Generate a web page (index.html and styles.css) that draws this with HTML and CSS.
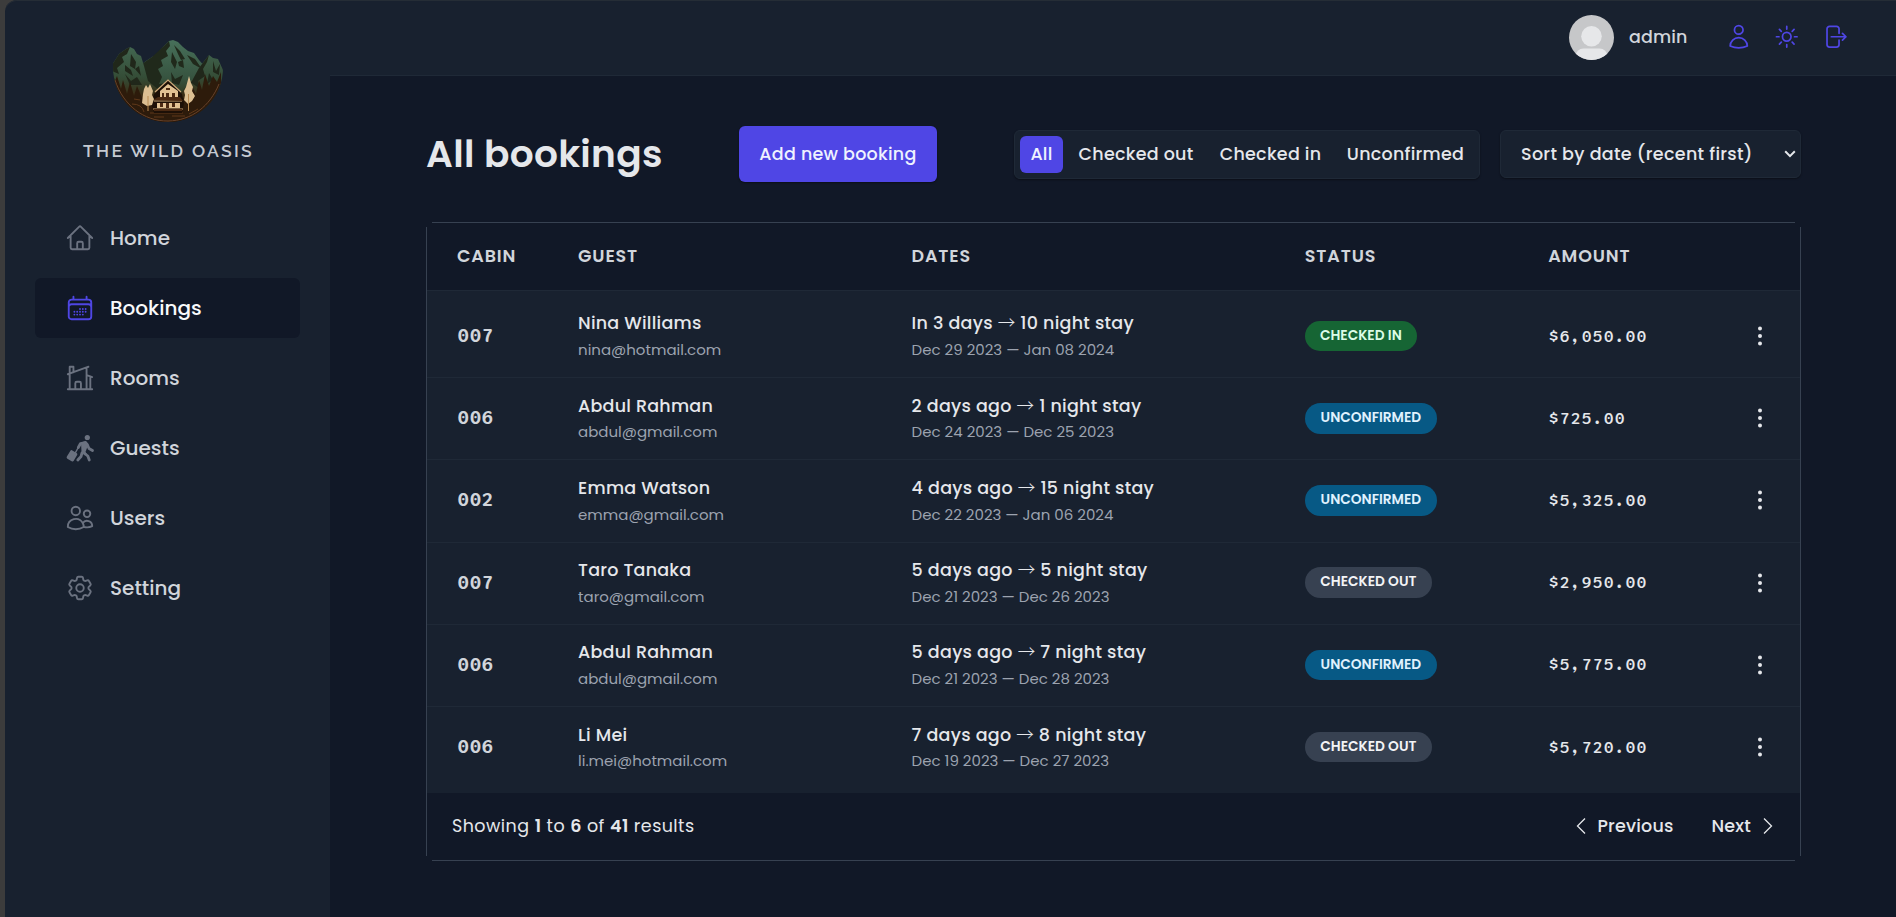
FILE: index.html
```html
<!DOCTYPE html>
<html lang="en">
<head>
<meta charset="utf-8">
<title>The Wild Oasis</title>
<link rel="stylesheet" href="styles.css">
</head>
<body>
<div class="app">
  <aside class="sidebar">
    <div class="logo">
      <svg class="logo-art" width="112" height="86" viewBox="0 0 112 86">
        <defs>
          <linearGradient id="mount" x1="0" y1="0" x2="0" y2="1"><stop offset="0" stop-color="#47705a"/><stop offset=".45" stop-color="#375440"/><stop offset=".68" stop-color="#31361d"/><stop offset="1" stop-color="#2b1708"/></linearGradient>
          <linearGradient id="side" x1="0" y1="0" x2="0" y2="1"><stop offset="0" stop-color="#426650"/><stop offset=".4" stop-color="#344c36"/><stop offset=".65" stop-color="#3b2a12"/><stop offset="1" stop-color="#261305"/></linearGradient>
          <clipPath id="bowl"><path d="M1 0H111V28C112 62 84 84 56 84S0 62 1 27Z"/></clipPath>
        </defs>
        <g clip-path="url(#bowl)">
          <path fill="url(#mount)" d="M30 26L34 23 40 19 45 16 52 8 57 3 61 2 66 4 71 9 76 13 82 15 87 22 94 30V86H20Z"/>
          <path fill="#20291b" d="M30 26L40 19 52 8 57 3 58 8 54 13 56 18 49 22 51 28 46 31 50 39 47 46 56 45 62 52 48 58 36 48 30 36ZM62 7L68 13 73 21 69 22 66 16ZM66 24l5-2 1 8-5-2zM75 17l8 4 7 10-9-5zM60 14l5 10-2 7-4-7zM59 34l4 7 8-4-4 10-7-2z"/>
          <path fill="url(#side)" d="M0 27L7 16 14 11 18 9 22 11 25 16 29 18 32 28 36 43 54 58 66 58 80 43 87 30 93 22 97 17 101 20 106 21 111 32V86H0Z"/>
          <path fill="#20271a" d="M0 27L7 16 14 11 18 9 15 16 10 19 12 24 5 30 7 36 0 33ZM19 16l5 8-1 7 4-3 2 10-6-7-5-3zM13 27l6 5 2 6-8-5zM80 43L87 30 97 17 95 24 91 31 93 38 86 43 87 50 78 44 68 56ZM101 23l3 10 4-7-1 11-6-3zM97 35l4 7-6 4zM13 36l6 7 6-4 5 8-12 0z"/>
          <path fill="#2d1b0b" d="M0 34l3 9 2-5 4 13 2-9 4 14 3-12 4 14 3-10 5 12h45l5-12 4 8 3-14 3 10 3-16 4 12 4-10 4 6 4-10V86H0Z"/>
          <path fill="none" stroke="#68422a" stroke-width="1" d="M3 42C11 67 32 83.500 56 83S98 68 107 46"/>
          <path fill="none" stroke="#60391a" d="M20 66q10 0 12 8M38 75h33M42 79h10m8-1h13M22 61l6 1m58 9-9 5"/>
        </g>
        <path fill="#1d1007" d="M39 65L42 56 56 42 70 56 72 65 70 75H42Z"/>
        <path fill="#e2c294" d="M48 53L56 46 66 53V60H48ZM45 65H68V70H45Z"/>
        <path fill="none" stroke="#cca677" stroke-width="1.200" d="M43 54L56 42 69 54M42 63h28M41 71h30"/>
        <path fill="#4b2a13" d="M41 62L46 59H68L71 63ZM50 55h2v4h-2zm4 0h3v4h-3zm6 0h3v4h-3zM48 65h3v4h-3zm6 0h3v5h-3zm6 0h3v4h-3zM54 50h4v2h-4zM42 71h28v2H42z"/>
        <path fill="#dcbf92" d="M34 47l2 3 2-4 3 7-1 4 2 4-2 6-5 1-5-3 1-9 1-5ZM77 38l2 7 2 4-1 4 3 5-3 5-4 3-4-4 1-5-1-4 2-4Z"/>
        <path fill="none" stroke="#b98b52" stroke-width="1" d="M36 58v15M76.500 56v17"/>
      </svg>
      <div class="logo-name">THE WILD OASIS</div>
    </div>
    <nav class="nav">
      <a class="nav-item"><svg class="icon" viewBox="0 0 24 24"><path d="m2.25 12 8.954-8.955c.44-.439 1.152-.439 1.591 0L21.75 12M4.500 9.750v10.125c0 .621.504 1.125 1.125 1.125H9.750v-4.875c0-.621.504-1.125 1.125-1.125h2.250c.621 0 1.125.504 1.125 1.125V21h4.125c.621 0 1.125-.504 1.125-1.125V9.750M8.250 21h8.250"/></svg><span>Home</span></a>
      <a class="nav-item active"><svg class="icon" viewBox="0 0 24 24"><path d="M6.750 3v2.250M17.250 3v2.250M3 18.750V7.500a2.250 2.250 0 0 1 2.250-2.250h13.500A2.250 2.250 0 0 1 21 7.500v11.250m-18 0A2.250 2.250 0 0 0 5.250 21h13.500A2.250 2.250 0 0 0 21 18.750m-18 0v-7.500A2.250 2.250 0 0 1 5.250 9h13.500A2.250 2.250 0 0 1 21 11.250v7.500m-9-6h.008v.008H12v-.008ZM12 15h.008v.008H12V15Zm0 2.250h.008v.008H12v-.008ZM9.750 15h.008v.008H9.750V15Zm0 2.250h.008v.008H9.750v-.008ZM7.500 15h.008v.008H7.500V15Zm0 2.250h.008v.008H7.500v-.008Zm6.750-4.500h.008v.008h-.008v-.008Zm0 2.250h.008v.008h-.008V15Zm0 2.250h.008v.008h-.008v-.008Zm2.250-4.500h.008v.008H16.500v-.008Zm0 2.250h.008v.008H16.500V15Z"/></svg><span>Bookings</span></a>
      <a class="nav-item"><svg class="icon" viewBox="0 0 24 24"><path d="M8.250 21v-4.875c0-.621.504-1.125 1.125-1.125h2.250c.621 0 1.125.504 1.125 1.125V21m0 0h4.500V3.545M12.750 21h7.500V10.750M2.250 21h1.500m18 0h-18M2.250 9l4.500-1.636M18.750 3l-1.500.545m0 6.205 3 1m1.500.5-1.500-.5M6.750 7.364V3h-3v18m3-13.636 10.500-3.819"/></svg><span>Rooms</span></a>
      <a class="nav-item"><svg class="icon walker" viewBox="0 0 30 30"><circle class="solid" cx="22.300" cy="4.500" r="2.600"/><rect class="solid" x="3" y="18" width="8" height="9.600" rx="1.500" transform="rotate(31 7 22.800)"/><path d="M10.500 19.500l2.500-4.500"/><path class="limb" d="M13.300 14.500L15.500 10.500 20 9.500 22.500 12 24 15.500 27.500 17.500M17 20L16 23.500 12.800 27M19 20l3.800 3 1.500 4"/><path class="solid" d="M16 9.500l5-1.500 2.500 3-3 8 1.500 2-2 1.500-3.500-3.500Z"/></svg><span>Guests</span></a>
      <a class="nav-item"><svg class="icon" viewBox="0 0 24 24"><path d="M15 19.128a9.380 9.380 0 0 0 2.625.372 9.337 9.337 0 0 0 4.121-.952 4.125 4.125 0 0 0-7.533-2.493M15 19.128v-.003c0-1.113-.285-2.160-.786-3.070M15 19.128v.106A12.318 12.318 0 0 1 8.624 21c-2.331 0-4.512-.645-6.374-1.766l-.001-.109a6.375 6.375 0 0 1 11.964-3.070M12 6.375a3.375 3.375 0 1 1-6.750 0 3.375 3.375 0 0 1 6.750 0Zm8.250 2.250a2.625 2.625 0 1 1-5.250 0 2.625 2.625 0 0 1 5.250 0Z"/></svg><span>Users</span></a>
      <a class="nav-item"><svg class="icon" viewBox="0 0 24 24"><path d="M9.594 3.940c.09-.542.56-.94 1.110-.94h2.593c.55 0 1.020.398 1.110.94l.213 1.281c.063.374.313.686.645.87.074.04.147.083.22.127.324.196.72.257 1.075.124l1.217-.456a1.125 1.125 0 0 1 1.370.49l1.296 2.247a1.125 1.125 0 0 1-.26 1.431l-1.003.827c-.293.24-.438.613-.431.992a6.759 6.759 0 0 1 0 .255c-.007.378.138.75.43.99l1.005.828c.424.35.534.954.26 1.430l-1.298 2.247a1.125 1.125 0 0 1-1.369.491l-1.217-.456c-.355-.133-.75-.072-1.076.124a6.570 6.570 0 0 1-.22.128c-.331.183-.581.495-.644.869l-.213 1.280c-.09.543-.56.941-1.110.941h-2.594c-.55 0-1.020-.398-1.110-.94l-.213-1.281c-.062-.374-.312-.686-.644-.87a6.520 6.520 0 0 1-.22-.127c-.325-.196-.72-.257-1.076-.124l-1.217.456a1.125 1.125 0 0 1-1.369-.49l-1.297-2.247a1.125 1.125 0 0 1 .26-1.431l1.004-.827c.292-.24.437-.613.43-.992a6.932 6.932 0 0 1 0-.255c.007-.378-.138-.75-.43-.99l-1.004-.828a1.125 1.125 0 0 1-.26-1.430l1.297-2.247a1.125 1.125 0 0 1 1.370-.491l1.216.456c.356.133.751.072 1.076-.124.072-.044.146-.087.22-.128.332-.183.582-.495.644-.869l.214-1.281ZM15 12a3 3 0 1 1-6 0 3 3 0 0 1 6 0Z"/></svg><span>Setting</span></a>
    </nav>
  </aside>
  <div class="page">
    <header class="topbar">
      <svg class="avatar" viewBox="0 0 45 45"><defs><clipPath id="face"><circle cx="22.500" cy="22.500" r="22.500"/></clipPath></defs><g clip-path="url(#face)"><path fill="#c6c7c9" d="M0 0h45v45H0z"/><circle cx="22.500" cy="21.300" r="10.300" fill="#e6e7e9"/><rect x="6.500" y="33.500" width="32" height="20" rx="8" fill="#e6e7e9"/></g></svg>
      <span class="user-name">admin</span>
      <div class="tools">
        <svg class="tool" viewBox="0 0 24 24"><path d="M15.750 6a3.750 3.750 0 1 1-7.500 0 3.750 3.750 0 0 1 7.500 0ZM4.501 20.118a7.500 7.500 0 0 1 14.998 0A17.933 17.933 0 0 1 12 21.750c-2.676 0-5.216-.584-7.499-1.632Z"/></svg>
        <svg class="tool" viewBox="0 0 24 24"><path d="M12 3v2.250m6.364.386-1.591 1.591M21 12h-2.250m-.386 6.364-1.591-1.591M12 18.750V21m-4.773-4.227-1.591 1.591M5.250 12H3m4.227-4.773L5.636 5.636M15.750 12a3.750 3.750 0 1 1-7.500 0 3.750 3.750 0 0 1 7.500 0Z"/></svg>
        <svg class="tool" viewBox="0 0 24 24"><path d="M15.750 9V5.250A2.250 2.250 0 0 0 13.500 3h-6a2.250 2.250 0 0 0-2.250 2.250v13.500A2.250 2.250 0 0 0 7.500 21h6a2.250 2.250 0 0 0 2.250-2.250V15m3 0 3-3m0 0-3-3m3 3H9"/></svg>
      </div>
    </header>
    <main class="main">
      <div class="heading">
        <h1>All bookings</h1>
        <button class="add">Add new booking</button>
        <div class="filter">
          <button class="on">All</button><button class="f-out">Checked out</button><button class="f-in">Checked in</button><button class="f-un">Unconfirmed</button>
        </div>
        <div class="sort"><span>Sort by date (recent first)</span><svg width="12" height="8" viewBox="0 0 12 8"><path d="M1.200 1.300 6 6.100l4.800-4.800"/></svg></div>
      </div>
      <section class="table">
        <div class="row head"><div>CABIN</div><div>GUEST</div><div>DATES</div><div>STATUS</div><div>AMOUNT</div><div></div></div>
        <div class="body">
          <div class="row"><div class="cabin">007</div><div><p class="name">Nina Williams</p><p class="mail">nina@hotmail.com</p></div><div><p class="stay">In 3 days <i>→</i> 10 night stay</p><p class="span">Dec 29 2023 — Jan 08 2024</p></div><div><span class="tag in">CHECKED IN</span></div><div class="amount">$6,050.00</div><svg class="dots" viewBox="0 0 30 30"><circle cx="15" cy="7.500" r="2"/><circle cx="15" cy="15" r="2"/><circle cx="15" cy="22.500" r="2"/></svg></div>
          <div class="row"><div class="cabin">006</div><div><p class="name">Abdul Rahman</p><p class="mail">abdul@gmail.com</p></div><div><p class="stay">2 days ago <i>→</i> 1 night stay</p><p class="span">Dec 24 2023 — Dec 25 2023</p></div><div><span class="tag un">UNCONFIRMED</span></div><div class="amount">$725.00</div><svg class="dots" viewBox="0 0 30 30"><circle cx="15" cy="7.500" r="2"/><circle cx="15" cy="15" r="2"/><circle cx="15" cy="22.500" r="2"/></svg></div>
          <div class="row"><div class="cabin">002</div><div><p class="name">Emma Watson</p><p class="mail">emma@gmail.com</p></div><div><p class="stay">4 days ago <i>→</i> 15 night stay</p><p class="span">Dec 22 2023 — Jan 06 2024</p></div><div><span class="tag un">UNCONFIRMED</span></div><div class="amount">$5,325.00</div><svg class="dots" viewBox="0 0 30 30"><circle cx="15" cy="7.500" r="2"/><circle cx="15" cy="15" r="2"/><circle cx="15" cy="22.500" r="2"/></svg></div>
          <div class="row"><div class="cabin">007</div><div><p class="name">Taro Tanaka</p><p class="mail">taro@gmail.com</p></div><div><p class="stay">5 days ago <i>→</i> 5 night stay</p><p class="span">Dec 21 2023 — Dec 26 2023</p></div><div><span class="tag out">CHECKED OUT</span></div><div class="amount">$2,950.00</div><svg class="dots" viewBox="0 0 30 30"><circle cx="15" cy="7.500" r="2"/><circle cx="15" cy="15" r="2"/><circle cx="15" cy="22.500" r="2"/></svg></div>
          <div class="row"><div class="cabin">006</div><div><p class="name">Abdul Rahman</p><p class="mail">abdul@gmail.com</p></div><div><p class="stay">5 days ago <i>→</i> 7 night stay</p><p class="span">Dec 21 2023 — Dec 28 2023</p></div><div><span class="tag un">UNCONFIRMED</span></div><div class="amount">$5,775.00</div><svg class="dots" viewBox="0 0 30 30"><circle cx="15" cy="7.500" r="2"/><circle cx="15" cy="15" r="2"/><circle cx="15" cy="22.500" r="2"/></svg></div>
          <div class="row"><div class="cabin">006</div><div><p class="name">Li Mei</p><p class="mail">li.mei@hotmail.com</p></div><div><p class="stay">7 days ago <i>→</i> 8 night stay</p><p class="span">Dec 19 2023 — Dec 27 2023</p></div><div><span class="tag out">CHECKED OUT</span></div><div class="amount">$5,720.00</div><svg class="dots" viewBox="0 0 30 30"><circle cx="15" cy="7.500" r="2"/><circle cx="15" cy="15" r="2"/><circle cx="15" cy="22.500" r="2"/></svg></div>
        </div>
        <footer class="foot">
          <p class="count">Showing <b>1</b> to <b>6</b> of <b>41</b> results</p>
          <div class="pager">
            <a><svg width="10" height="18" viewBox="0 0 10 18"><path d="M9 1.500 1.500 9 9 16.500"/></svg><span>Previous</span></a>
            <a><span>Next</span><svg width="10" height="18" viewBox="0 0 10 18"><path d="M1 1.500 8.500 9 1 16.500"/></svg></a>
          </div>
        </footer>
      </section>
    </main>
  </div>
</div>
</body>
</html>
```

FILE: styles.css
```css
* { box-sizing: border-box; margin: 0; padding: 0; }
body { height: 917px; overflow: hidden; background: #3c3c3c; padding-left: 5px; font-family: Poppins, Inter, sans-serif; font-size: 17.5px; color: #e5e7eb; white-space: nowrap; }
button { font: inherit; color: inherit; border: 0; background: none; letter-spacing: inherit; }

.app { display: flex; height: 917px; background: #18212f; box-shadow: inset 0 1px #252d36; border-top-left-radius: 12px; overflow: hidden; }
.sidebar { width: 325px; flex: none; padding: 38px 30px 0; }
.logo { display: flex; flex-direction: column; align-items: center; height: 170px; }
.logo-art { display: block; }
.logo-name { font-family: Raleway, Lato, sans-serif; font-size: 17.5px; line-height: 22px; font-weight: 600; letter-spacing: 2.3px; color: #c5cad2; margin-top: 16px; padding-left: 2px; }

.nav { display: flex; flex-direction: column; gap: 10px; }
.nav-item { display: flex; align-items: center; gap: 15px; height: 60px; padding: 0 30px; border-radius: 6px; font-size: 20px; font-weight: 500; color: #d1d5db; }
.nav-item span { padding-bottom: 1px; }
.nav-item.active { background: #111827; color: #f9fafb; }
.icon, .tool { fill: none; stroke: #6b7280; stroke-width: 1.5; stroke-linecap: round; stroke-linejoin: round; }
.icon { width: 30px; height: 30px; }
.active .icon { stroke: #4f46e5; }
.walker .solid { fill: #6b7280; stroke: none; }
.walker .limb { stroke-width: 2.8; }

.page { flex: 1; display: flex; flex-direction: column; }
.topbar { height: 76px; display: flex; align-items: center; justify-content: flex-end; padding: 0 47.5px 1px 0; border-bottom: 1px solid #1f2937; }
.avatar { width: 45px; height: 45px; margin-right: 15.5px; }
.user-name { font-weight: 500; width: 59px; color: #d1d5db; padding-bottom: 1px; letter-spacing: .1px; }
.tools { display: flex; gap: 20.5px; margin-left: 37px; }
.tool { width: 27.5px; height: 27.5px; stroke: #4f46e5; }

.main { flex: 1; background: #111827; padding: 50px 95px 0 96px; }
.heading { display: flex; align-items: center; height: 56px; margin-bottom: 40px; letter-spacing: .26px; }
h1 { width: 313px; font-size: 37.5px; font-weight: 600; line-height: 56px; letter-spacing: .32px; }
.add { width: 198px; height: 56px; border-radius: 6px; background: #4f46e5; color: #eef2ff; font-weight: 500; box-shadow: 0 1px 2px rgba(0,0,0,.4); padding-bottom: 1px; }
.filter { display: flex; gap: 5px; width: 466px; height: 49px; margin-left: 77px; padding: 5px; border: 1px solid #1f2937; border-radius: 6px; background: #18212f; box-shadow: 0 1px 2px rgba(0,0,0,.4); font-weight: 500; }
.filter button { height: 37px; border-radius: 6px; text-align: center; padding-bottom: 1px; }
.filter .on { width: 43px; background: #4f46e5; color: #eef2ff; }
.f-out { width: 136px; }
.f-in { width: 123px; }
.f-un { width: 137px; }
.sort { display: flex; align-items: center; justify-content: space-between; width: 301px; height: 48px; margin-left: 20px; padding: 0 4px 0 20px; border: 1px solid #1f2937; border-radius: 6px; background: #18212f; font-weight: 500; letter-spacing: .32px; box-shadow: 0 1px 2px rgba(0,0,0,.4); }
.sort path { fill: none; stroke: #e5e7eb; stroke-width: 2; }

/* Frame lines stop short of the rounded corners. */
.table { padding: 1px; background:
  linear-gradient(#374151,#374151) 50% 0 / calc(100% - 12px) 1px no-repeat,
  linear-gradient(#374151,#374151) 50% 100% / calc(100% - 12px) 1px no-repeat,
  linear-gradient(#374151,#374151) 0 50% / 1px calc(100% - 10px) no-repeat,
  linear-gradient(#374151,#374151) 100% 50% / 1px calc(100% - 10px) no-repeat; }
.row { display: grid; grid-template-columns: .6fr 2fr 2.394fr 1.406fr 1fr 40px; column-gap: 30px; align-items: center; height: 82.2px; padding: 0 30px 1px; border-bottom: 1px solid #1f2937; }
.head { height: 68px; font-weight: 600; letter-spacing: .85px; color: #d1d5db; }
.body { background: #18212f; padding: 5px 0; }
.body .row:last-child { height: 81.4px; border-bottom: 0; }
.cabin { font: 600 20px Sono, "Liberation Mono", monospace; color: #d1d5db; letter-spacing: -.2px; }
.name, .stay { font-weight: 500; line-height: 26.25px; height: 26.25px; margin-bottom: 2.5px; }
.name { letter-spacing: .24px; }
.stay { letter-spacing: .28px; }
.stay i { font: 300 17.5px/1 "Noto Sans CJK JP", sans-serif; }
.mail, .span { font-size: 15px; line-height: 22.5px; color: #9ca3af; }
.tag { display: inline-block; height: 30.5px; line-height: 29px; border-radius: 16px; text-align: center; font-size: 13.75px; font-weight: 600; }
.tag.in { width: 112px; background: #166534; color: #dcfce7; }
.tag.un { width: 132px; background: #075985; color: #e0f2fe; }
.tag.out { width: 127px; background: #374151; color: #f3f4f6; }
.amount { font: 500 17.5px Sono, "Liberation Mono", monospace; letter-spacing: .15px; }
.dots { width: 30px; height: 30px; fill: #e5e7eb; justify-self: end; margin-right: -5px; }
.foot { display: flex; align-items: center; justify-content: space-between; height: 67px; padding: 0 27px 1px 25px; }
.count { letter-spacing: .45px; }
.count b { font-weight: 600; }
.pager { display: flex; gap: 38px; font-weight: 500; letter-spacing: .2px; }
.pager a { display: flex; align-items: center; gap: 11px; }
.pager a:last-child { gap: 12px; }
.pager path { fill: none; stroke: #e5e7eb; stroke-width: 1.3; }
```
